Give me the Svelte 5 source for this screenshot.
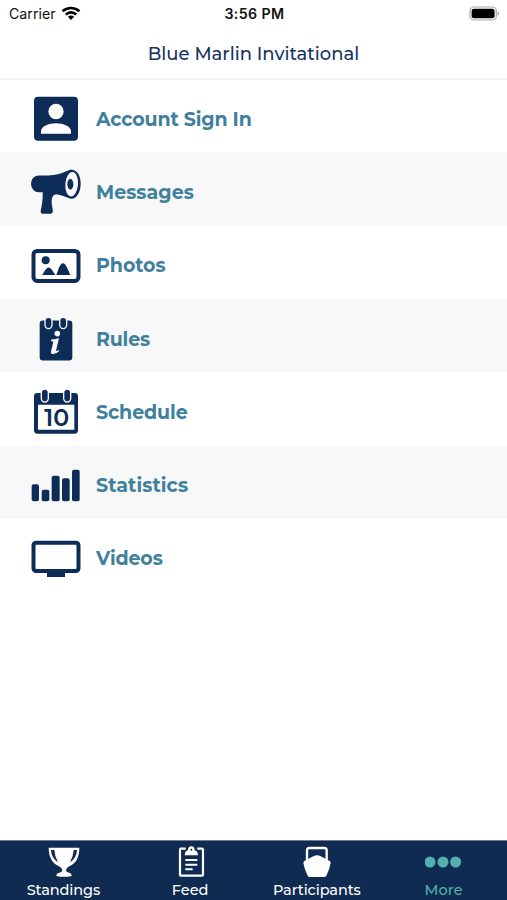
<script>
  const items = [
    { id: 'account', label: 'Account Sign In', spacing: -0.15, top: 22.5 },
    { id: 'messages', label: 'Messages', spacing: 0.05, top: 23.4 },
    { id: 'photos', label: 'Photos', spacing: -0.1, top: 24.3 },
    { id: 'rules', label: 'Rules', spacing: -0.2, top: 22.2 },
    { id: 'schedule', label: 'Schedule', spacing: -0.1, top: 23.1 },
    { id: 'statistics', label: 'Statistics', spacing: 0.1, top: 24 },
    { id: 'videos', label: 'Videos', spacing: -0.15, top: 21.9 }
  ];
  const tabs = [
    { id: 'standings', label: 'Standings', spacing: -0.1, left: 136 },
    { id: 'feed', label: 'Feed', spacing: 0, left: 516 },
    { id: 'participants', label: 'Participants', spacing: -0.1, left: 137 },
    { id: 'more', label: 'More', spacing: 0.1, left: 518, active: true }
  ];
</script>

<div class="screen">
  <div class="status">
    <div class="carrier">
      <span>Carrier</span>
      <svg width="20" height="16" viewBox="0 0 20 16" fill="none" stroke="#000" stroke-width="2.7">
        <path d="M1.6 5.2C6.2 .9 13.8 .9 18.4 5.2M4.8 8.6C7.7 5.7 12.3 5.7 15.2 8.6" />
        <path d="M10 13.9 6.9 10.8Q10 8.2 13.1 10.8Z" fill="#000" stroke="none" />
      </svg>
    </div>
    <span class="time">3:56 PM</span>
    <svg class="battery" width="31" height="16" viewBox="0 0 31 16">
      <rect x="1" y="1" width="26.3" height="13" rx="4" fill="#fff" stroke="#aaa" stroke-width="1.2" />
      <rect x="2.6" y="2.7" width="23" height="9.6" rx="2.3" />
      <path d="M28.6 5.3Q30.4 6 30.4 7.5T28.6 9.7Z" fill="#aaa" />
    </svg>
  </div>

  <header><h1>Blue Marlin Invitational</h1></header>

  <main>
    {#each items as item}
      <div class="row">
        <svg class="icon" viewBox="24 {item.top} 168 168">
          {#if item.id === 'account'}
            <rect x="42" y="40" width="132" height="132" rx="12" />
            <circle cx="108" cy="84" r="23" fill="#fff" />
            <path d="M63 151V143C63 128 86 119 108 119S153 128 153 143V151Z" fill="#fff" />
          {:else if item.id === 'messages'}
            <path d="M57 58H84C108 57 127 51 146 42C169 35 183 58 182 84C181 113 166 131 150 127C136 121 124 116 108 114C97 116 95 127 95 138C95 148 100 162 98 168Q97 172 92 173H69Q61 173 62 164C65 150 69 132 68 108H57C26 108 25 58 57 58Z" />
            <ellipse cx="155" cy="84" rx="19" ry="37" fill="#f8f8f8" transform="rotate(4 155 84)" />
            <ellipse cx="151" cy="84" rx="9" ry="16" />
          {:else if item.id === 'photos'}
            <rect x="40.5" y="63" width="135" height="90" rx="11" fill="none" stroke="#0d2c57" stroke-width="12" />
            <circle cx="77" cy="91" r="12" />
            <path d="M66 135L77 119Q86 107 95 119L106 135ZM109 135L117 113Q129 87 141 113L151 135Z" />
          {:else if item.id === 'rules'}
            <rect x="59" y="51" width="98" height="120" rx="10" />
            <g stroke="#f8f8f8" stroke-width="4">
              <rect x="75" y="41" width="21" height="34" rx="10.5" />
              <rect x="119" y="41" width="21" height="34" rx="10.5" />
            </g>
            <circle cx="112" cy="90" r="8.5" fill="#f8f8f8" />
            <path d="M94 108Q108 107 117 103L108 142Q112 143 116 139L118 142Q107 153 96 151Q91 148 94 139L100 115Q98 112 93 113Z" fill="#f8f8f8" />
          {:else if item.id === 'schedule'}
            <rect x="42" y="50" width="132" height="122" rx="10" />
            <path d="M54 85H163V160H54Z" fill="#fff" />
            <g stroke="#fff" stroke-width="4">
              <rect x="64" y="38" width="21" height="39" rx="10.5" />
              <rect x="131" y="38" width="21" height="39" rx="10.5" />
            </g>
            <text x="110" y="148" text-anchor="middle" class="date">10</text>
          {:else if item.id === 'statistics'}
            <rect x="35" y="103" width="22" height="51" rx="6" />
            <rect x="65" y="119" width="23" height="35" rx="6" />
            <rect x="95" y="77" width="24" height="77" rx="6" />
            <rect x="126" y="85" width="23" height="69" rx="6" />
            <rect x="156" y="59" width="23" height="95" rx="6" />
          {:else}
            <rect x="40.5" y="57" width="135" height="85" rx="8" fill="none" stroke="#0d2c57" stroke-width="12" />
            <path d="M81 146H135V160H81Z" />
          {/if}
        </svg>
        <span class="label" style="letter-spacing: {item.spacing}px">{item.label}</span>
      </div>
    {/each}
  </main>

  <nav>
    {#each tabs as tab}
      <div class="tab" class:active={tab.active}>
        <svg viewBox="{tab.left} 42 110 108" fill="currentColor">
          {#if tab.id === 'standings'}
            <path d="M147 53H239C239 79 230 99 212 107Q200 112 199 121Q200 127 211 129Q216 131 216 138Q193 143 170 138Q170 131 176 129Q187 127 188 121Q187 112 175 107C157 99 147 79 147 53Z" />
            <path d="M154 60H164Q165 80 175 97Q155 84 154 60ZM232 60H222Q221 80 211 97Q231 84 232 60Z" fill="#0f2b52" />
          {:else if tab.id === 'feed'}
            <path d="M557 56H543Q540 56 540 59V134Q540 137 543 137H606Q609 137 609 134V59Q609 56 606 56H592" fill="none" stroke="currentColor" stroke-width="6.5" />
            <path d="M554 76Q555 63 564 61Q564 49 574 49T584 61Q593 63 594 76Z" />
            <circle cx="574" cy="59" r="3" fill="#0f2b52" />
            <path d="M556 90H592M556 104H592M556 118H578" stroke="currentColor" stroke-width="6" />
          {:else if tab.id === 'participants'}
            <path d="M161 95V61Q161 54 168 54H213Q220 54 220 61V95" fill="none" stroke="currentColor" stroke-width="7" />
            <path d="M150 98Q151 94 157 91L180 79Q191 73 202 79L225 91Q232 94 232 98Q229 119 219 137Q217 141 212 141H170Q165 141 163 137Q153 119 150 98Z" />
          {:else}
            <circle cx="533" cy="96" r="16.5" />
            <circle cx="572" cy="96" r="16.5" />
            <circle cx="610" cy="96" r="16.5" />
          {/if}
        </svg>
        <span style="letter-spacing: {tab.spacing}px">{tab.label}</span>
      </div>
    {/each}
  </nav>
</div>

<style>
  :global(body) { margin: 0; }
  .screen {
    display: flex;
    flex-direction: column;
    width: 507px;
    height: 900px;
    overflow: hidden;
    background: #fff;
    font-family: Montserrat, Inter, "Open Sans", sans-serif;
  }
  .status {
    display: grid;
    grid-template-columns: 1fr auto 1fr;
    align-items: center;
    height: 28px;
    box-sizing: border-box;
    padding: 0 7px 0 9px;
    font: 14.2px/28px Inter, sans-serif;
    color: #111;
  }
  .carrier { display: flex; align-items: center; gap: 5px; }
  .time { font-weight: 600; letter-spacing: 0.4px; }
  .battery { justify-self: end; }
  header {
    height: 52px;
    box-sizing: border-box;
    border-bottom: 2px solid #f1f1f1;
    text-align: center;
  }
  h1 {
    margin: 0;
    font-size: 18px;
    font-weight: 500;
    line-height: 52px;
    height: 50px;
    color: #17335f;
  }
  main { flex: 1; margin-top: -1px; }
  .row {
    display: flex;
    align-items: center;
    height: 73.33px;
    box-sizing: border-box;
    padding: 7px 28px 0;
    gap: 12px;
  }
  .row:nth-child(even) { background: #f8f8f8; }
  .icon { width: 56px; height: 56px; fill: #0d2c57; }
  .date { font: 600 71px Montserrat, Inter, sans-serif; }
  .label {
    padding-bottom: 0.3px;
    font-size: 19px;
    font-weight: 700;
    color: #40809c;
  }
  nav {
    display: flex;
    height: 60px;
    box-sizing: border-box;
    border-top: 1px solid #6c7f95;
    background: #0f2b52;
    color: #fff;
  }
  .tab {
    flex: 1;
    display: flex;
    flex-direction: column;
    align-items: center;
    padding-top: 3px;
    font-size: 14.5px;
    font-weight: 500;
    line-height: 20px;
  }
  .tab svg { width: 36.67px; height: 36px; }
  .active { color: #52b1ad; }
</style>
